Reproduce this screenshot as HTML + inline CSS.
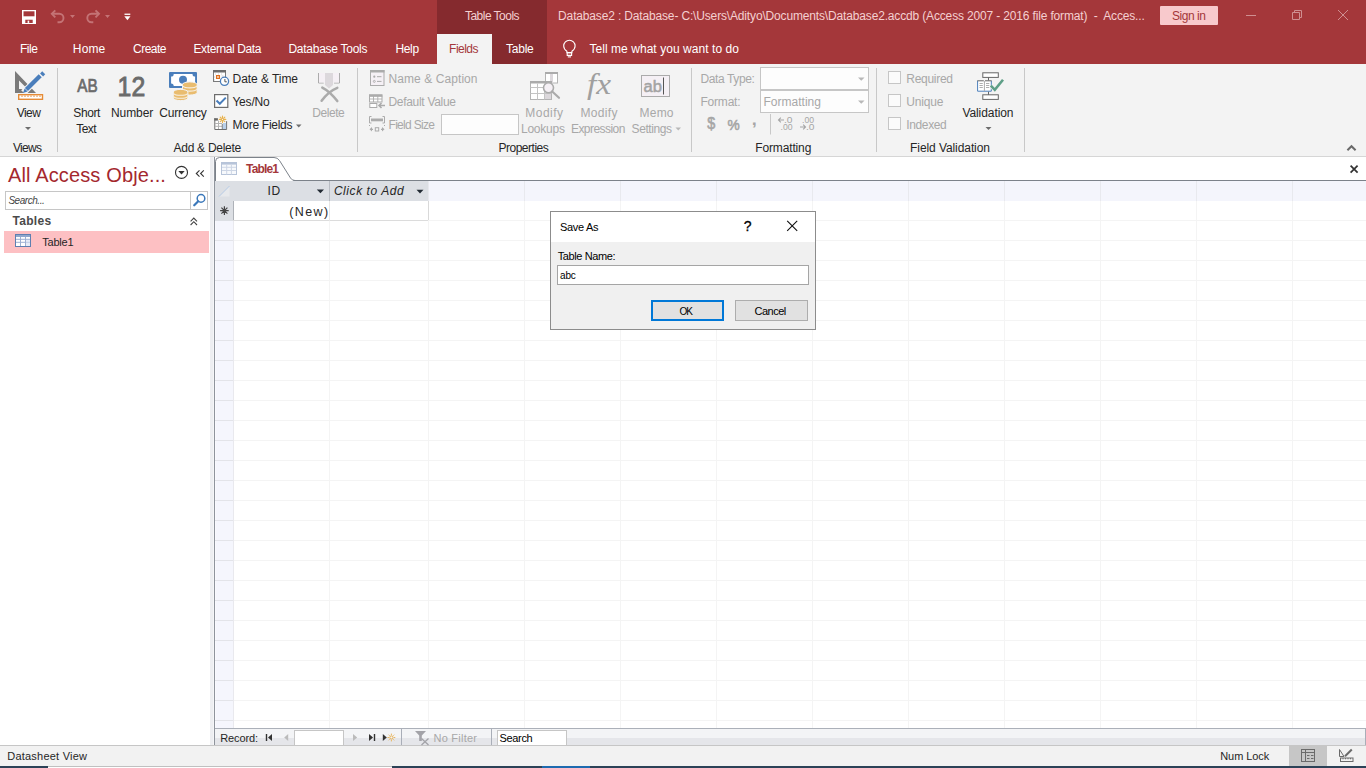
<!DOCTYPE html>
<html><head><meta charset="utf-8">
<style>
*{margin:0;padding:0;box-sizing:border-box}
html,body{width:1366px;height:768px;overflow:hidden;background:#fff;font-family:"Liberation Sans",sans-serif;font-size:12px;color:#262626}
.a{position:absolute}
.ic{position:absolute}
.t{position:absolute;white-space:nowrap;line-height:20px;height:20px}
.wt{color:#fff}
.pk{color:#f4d0d1}
.sg{color:#a4373a}
.rd{color:#a4373a}
.rd2{color:#a4282e}
.gl{color:#262626}
.bk{color:#000}
.sr{color:#444}
.tb{color:#4a4a4a}
.dis{color:#a8a8a8}
svg{position:absolute;overflow:visible}
</style></head><body>
<!-- title bar & tabs -->
<div class="a" style="left:0;top:0;width:1366px;height:64px;background:#a4373a"></div>
<div class="a" style="left:437px;top:0;width:110px;height:64px;background:#852a2e"></div>
<div class="a" style="left:437px;top:34px;width:55px;height:30px;background:#f3f3f3"></div>
<div class="a" style="left:1160px;top:6px;width:58px;height:19px;background:#f8c9cc;border-radius:1px"></div>

<!-- ribbon -->
<div class="a" style="left:0;top:64px;width:1366px;height:92px;background:#f3f3f3"></div>
<div class="a" style="left:0;top:156px;width:1366px;height:1px;background:#d6d6d6"></div>
<div class="a" style="left:57px;top:68px;width:1px;height:84px;background:#c8c8c8"></div>
<div class="a" style="left:357px;top:68px;width:1px;height:84px;background:#c8c8c8"></div>
<div class="a" style="left:691px;top:68px;width:1px;height:84px;background:#c8c8c8"></div>
<div class="a" style="left:876px;top:68px;width:1px;height:84px;background:#c8c8c8"></div>
<div class="a" style="left:1024px;top:68px;width:1px;height:84px;background:#c8c8c8"></div>

<!-- nav pane -->
<div class="a" style="left:0;top:157px;width:210px;height:588px;background:#fff"></div>
<div class="a" style="left:210px;top:157px;width:3px;height:588px;background:#edeef1"></div>
<div class="a" style="left:213px;top:157px;width:1px;height:588px;background:#f5f6f8"></div>
<div class="a" style="left:214px;top:157px;width:1px;height:588px;background:#8f949c"></div>
<div class="a" style="left:5px;top:191px;width:203px;height:19px;border:1px solid #c6c6c6;background:#fff"></div>
<div class="a" style="left:190px;top:191px;width:1px;height:19px;background:#c6c6c6"></div>
<div class="a" style="left:4px;top:231px;width:205px;height:22px;background:#fdc0c3"></div>

<!-- document area -->
<div class="a" style="left:215px;top:157px;width:1151px;height:588px;background:#fff"></div>
<div class="a" style="left:293px;top:180px;width:1073px;height:1px;background:#7c828a"></div>
<div class="a" style="left:215px;top:181px;width:213px;height:20px;background:#dcdfe4"></div>
<div class="a" style="left:428px;top:181px;width:938px;height:20px;background:#f4f5fc"></div>
<div class="a" style="left:329px;top:181px;width:1px;height:20px;background:#b9bdc4"></div>
<div class="a" style="left:524px;top:181px;width:1px;height:20px;background:#e8e9ee"></div>
<div class="a" style="left:620px;top:181px;width:1px;height:20px;background:#e8e9ee"></div>
<div class="a" style="left:716px;top:181px;width:1px;height:20px;background:#e8e9ee"></div>
<div class="a" style="left:812px;top:181px;width:1px;height:20px;background:#e8e9ee"></div>
<div class="a" style="left:908px;top:181px;width:1px;height:20px;background:#e8e9ee"></div>
<div class="a" style="left:1004px;top:181px;width:1px;height:20px;background:#e8e9ee"></div>
<div class="a" style="left:1100px;top:181px;width:1px;height:20px;background:#e8e9ee"></div>
<div class="a" style="left:1196px;top:181px;width:1px;height:20px;background:#e8e9ee"></div>
<div class="a" style="left:1292px;top:181px;width:1px;height:20px;background:#e8e9ee"></div>
<div class="a" style="left:428px;top:181px;width:1px;height:20px;background:#e8e9ee"></div>
<div class="a" style="left:215px;top:201px;width:18px;height:20px;background:#dcdfe4"></div>
<div class="a" style="left:233px;top:201px;width:1px;height:20px;background:#aeb2b8"></div>
<div class="a" style="left:233px;top:220px;width:196px;height:1px;background:#dcdcdc"></div>
<div class="a" style="left:329px;top:201px;width:1px;height:20px;background:#e6e6e6"></div>
<div class="a" style="left:428px;top:201px;width:1px;height:20px;background:#d9d9d9"></div>
<div class="a" style="left:215px;top:221px;width:18px;height:507px;background:#f5f6fd"></div>
<div class="a" style="left:215px;top:221px;width:1px;height:507px;background:#fafafe"></div>
<div class="a" style="left:233px;top:221px;width:1px;height:507px;background:#e9e9ee"></div>
<div class="a" style="left:215px;top:240px;width:18px;height:1px;background:#e3e4e9"></div>
<div class="a" style="left:234px;top:240px;width:1132px;height:1px;background:#f4f4f4"></div>
<div class="a" style="left:215px;top:260px;width:18px;height:1px;background:#e3e4e9"></div>
<div class="a" style="left:234px;top:260px;width:1132px;height:1px;background:#f4f4f4"></div>
<div class="a" style="left:215px;top:280px;width:18px;height:1px;background:#e3e4e9"></div>
<div class="a" style="left:234px;top:280px;width:1132px;height:1px;background:#f4f4f4"></div>
<div class="a" style="left:215px;top:300px;width:18px;height:1px;background:#e3e4e9"></div>
<div class="a" style="left:234px;top:300px;width:1132px;height:1px;background:#f4f4f4"></div>
<div class="a" style="left:215px;top:320px;width:18px;height:1px;background:#e3e4e9"></div>
<div class="a" style="left:234px;top:320px;width:1132px;height:1px;background:#f4f4f4"></div>
<div class="a" style="left:215px;top:340px;width:18px;height:1px;background:#e3e4e9"></div>
<div class="a" style="left:234px;top:340px;width:1132px;height:1px;background:#f4f4f4"></div>
<div class="a" style="left:215px;top:360px;width:18px;height:1px;background:#e3e4e9"></div>
<div class="a" style="left:234px;top:360px;width:1132px;height:1px;background:#f4f4f4"></div>
<div class="a" style="left:215px;top:380px;width:18px;height:1px;background:#e3e4e9"></div>
<div class="a" style="left:234px;top:380px;width:1132px;height:1px;background:#f4f4f4"></div>
<div class="a" style="left:215px;top:400px;width:18px;height:1px;background:#e3e4e9"></div>
<div class="a" style="left:234px;top:400px;width:1132px;height:1px;background:#f4f4f4"></div>
<div class="a" style="left:215px;top:420px;width:18px;height:1px;background:#e3e4e9"></div>
<div class="a" style="left:234px;top:420px;width:1132px;height:1px;background:#f4f4f4"></div>
<div class="a" style="left:215px;top:440px;width:18px;height:1px;background:#e3e4e9"></div>
<div class="a" style="left:234px;top:440px;width:1132px;height:1px;background:#f4f4f4"></div>
<div class="a" style="left:215px;top:460px;width:18px;height:1px;background:#e3e4e9"></div>
<div class="a" style="left:234px;top:460px;width:1132px;height:1px;background:#f4f4f4"></div>
<div class="a" style="left:215px;top:480px;width:18px;height:1px;background:#e3e4e9"></div>
<div class="a" style="left:234px;top:480px;width:1132px;height:1px;background:#f4f4f4"></div>
<div class="a" style="left:215px;top:500px;width:18px;height:1px;background:#e3e4e9"></div>
<div class="a" style="left:234px;top:500px;width:1132px;height:1px;background:#f4f4f4"></div>
<div class="a" style="left:215px;top:520px;width:18px;height:1px;background:#e3e4e9"></div>
<div class="a" style="left:234px;top:520px;width:1132px;height:1px;background:#f4f4f4"></div>
<div class="a" style="left:215px;top:540px;width:18px;height:1px;background:#e3e4e9"></div>
<div class="a" style="left:234px;top:540px;width:1132px;height:1px;background:#f4f4f4"></div>
<div class="a" style="left:215px;top:560px;width:18px;height:1px;background:#e3e4e9"></div>
<div class="a" style="left:234px;top:560px;width:1132px;height:1px;background:#f4f4f4"></div>
<div class="a" style="left:215px;top:580px;width:18px;height:1px;background:#e3e4e9"></div>
<div class="a" style="left:234px;top:580px;width:1132px;height:1px;background:#f4f4f4"></div>
<div class="a" style="left:215px;top:600px;width:18px;height:1px;background:#e3e4e9"></div>
<div class="a" style="left:234px;top:600px;width:1132px;height:1px;background:#f4f4f4"></div>
<div class="a" style="left:215px;top:620px;width:18px;height:1px;background:#e3e4e9"></div>
<div class="a" style="left:234px;top:620px;width:1132px;height:1px;background:#f4f4f4"></div>
<div class="a" style="left:215px;top:640px;width:18px;height:1px;background:#e3e4e9"></div>
<div class="a" style="left:234px;top:640px;width:1132px;height:1px;background:#f4f4f4"></div>
<div class="a" style="left:215px;top:660px;width:18px;height:1px;background:#e3e4e9"></div>
<div class="a" style="left:234px;top:660px;width:1132px;height:1px;background:#f4f4f4"></div>
<div class="a" style="left:215px;top:680px;width:18px;height:1px;background:#e3e4e9"></div>
<div class="a" style="left:234px;top:680px;width:1132px;height:1px;background:#f4f4f4"></div>
<div class="a" style="left:215px;top:700px;width:18px;height:1px;background:#e3e4e9"></div>
<div class="a" style="left:234px;top:700px;width:1132px;height:1px;background:#f4f4f4"></div>
<div class="a" style="left:215px;top:720px;width:18px;height:1px;background:#e3e4e9"></div>
<div class="a" style="left:234px;top:720px;width:1132px;height:1px;background:#f4f4f4"></div>
<div class="a" style="left:428px;top:220px;width:938px;height:1px;background:#f4f4f4"></div>
<div class="a" style="left:329px;top:221px;width:1px;height:507px;background:#f4f4f4"></div>
<div class="a" style="left:428px;top:221px;width:1px;height:507px;background:#f4f4f4"></div>
<div class="a" style="left:524px;top:201px;width:1px;height:527px;background:#f4f4f4"></div>
<div class="a" style="left:620px;top:201px;width:1px;height:527px;background:#f4f4f4"></div>
<div class="a" style="left:716px;top:201px;width:1px;height:527px;background:#f4f4f4"></div>
<div class="a" style="left:812px;top:201px;width:1px;height:527px;background:#f4f4f4"></div>
<div class="a" style="left:908px;top:201px;width:1px;height:527px;background:#f4f4f4"></div>
<div class="a" style="left:1004px;top:201px;width:1px;height:527px;background:#f4f4f4"></div>
<div class="a" style="left:1100px;top:201px;width:1px;height:527px;background:#f4f4f4"></div>
<div class="a" style="left:1196px;top:201px;width:1px;height:527px;background:#f4f4f4"></div>
<div class="a" style="left:1292px;top:201px;width:1px;height:527px;background:#f4f4f4"></div>
<!-- record bar -->
<div class="a" style="left:215px;top:728px;width:1151px;height:1px;background:#abb0b9"></div>
<div class="a" style="left:215px;top:729px;width:1151px;height:9px;background:#f3f4f6"></div>
<div class="a" style="left:215px;top:738px;width:1151px;height:7px;background:#e5e6ea"></div>
<div class="a" style="left:1365px;top:728px;width:1px;height:18px;background:#a9aeb8"></div>
<div class="a" style="left:294px;top:730px;width:50px;height:15px;border:1px solid #c6c6c6;border-bottom:none;background:#fff"></div>
<div class="a" style="left:401px;top:729px;width:1px;height:16px;background:#a9aeb8"></div>
<div class="a" style="left:491px;top:729px;width:1px;height:16px;background:#a9aeb8"></div>
<div class="a" style="left:497px;top:730px;width:70px;height:15px;border:1px solid #c6c6c6;border-bottom:none;background:#fff"></div>

<!-- status bar -->
<div class="a" style="left:0;top:745px;width:1366px;height:1px;background:#c6c6c6"></div>
<div class="a" style="left:0;top:746px;width:1366px;height:20px;background:#f2f2f2"></div>
<div class="a" style="left:1289px;top:746px;width:38px;height:20px;background:#c6c6c6"></div>
<div class="a" style="left:0;top:766px;width:1366px;height:2px;background:#2c4257"></div>
<div class="a" style="left:48px;top:766px;width:344px;height:1px;background:#c0c0c0"></div>
<div class="a" style="left:48px;top:767px;width:344px;height:1px;background:#fff"></div>
<div class="a" style="left:542px;top:766px;width:48px;height:2px;background:#1e6bb0"></div>

<svg class="ic" width="1366" height="768" style="left:0;top:0" viewBox="0 0 1366 768">
<!-- QAT save -->
<path d="M22 10h14v14h-14z" fill="#fff"/>
<path d="M23.5 11.3h11v5h-11z" fill="#a4373a"/>
<path d="M25.3 19.7h7.4v3.2h-7.4z" fill="#a4373a"/>
<path d="M27.6 20.6h1.6v2.3h-1.6z" fill="#fff"/>
<!-- undo -->
<g fill="none" stroke="#c47375" stroke-width="1.9">
<path d="M52 13.8h7.3a4.2 4.2 0 0 1 0 8.4h-1.8"/>
<path d="M55.3 10.3l-3.5 3.5 3.5 3.5"/>
<path d="M98.8 13.8h-7.3a4.2 4.2 0 0 0 0 8.4h1.8"/>
<path d="M95.5 10.3l3.5 3.5-3.5 3.5"/>
</g>
<path d="M70 15h5l-2.5 3z M105 15h5l-2.5 3z" fill="#c47375"/>
<!-- customize -->
<path d="M124.5 13.6h5.8v1.3h-5.8z" fill="#fff"/>
<path d="M124.3 16.3h6.2l-3.1 3.9z" fill="#fff"/>
<!-- bulb -->
<g fill="none" stroke="#fff" stroke-width="1.1">
<path d="M566.9 52.6v-1.3c-1.8-1.3-3.2-3.1-3.2-5.3a5.7 5.7 0 0 1 11.4 0c0 2.2-1.4 4-3.2 5.3v1.3z"/>
<path d="M567.2 52.8h4.4v2.6h-4.4z"/>
<path d="M567.8 56.9h3.2"/>
</g>
<!-- window controls -->
<g stroke="#cf8f91" stroke-width="1" fill="none">
<path d="M1246 15.5h10"/>
<path d="M1292.5 12.5h7v7h-7z M1294.5 12.5v-2h7v7h-2"/>
<path d="M1338 10l10 10 M1348 10l-10 10"/>
</g>

<!-- View icon -->
<path d="M15 71V93H36Z M19 80.5V89H27.5Z" fill="#7a7a7a" fill-rule="evenodd"/>
<path d="M23.5 92.5L43.5 72.5" stroke="#f3f3f3" stroke-width="6.5"/>
<path d="M23 93l1.6-4.6 3 3z" fill="#4a7ebb"/>
<path d="M26.4 89.6L40.2 75.8" stroke="#4a7ebb" stroke-width="4.3"/>
<path d="M41.6 74.9L43.7 72.8" stroke="#4a7ebb" stroke-width="4.3"/>
<rect x="18.7" y="94.7" width="23.8" height="4.6" fill="#fff" stroke="#e58b36" stroke-width="1.4"/>
<path d="M22 95.5v1.5 M25 95.5v1.5 M28 95.5v1.5 M31 95.5v1.5 M34 95.5v1.5 M37 95.5v1.5 M40 95.5v1.5" stroke="#e58b36" stroke-width="1"/>
<!-- AB, 12 -->
<text x="77.3" y="92" font-family="Liberation Sans" font-size="18.4" fill="#6b6b6b" stroke="#6b6b6b" stroke-width="0.7" textLength="20.4" lengthAdjust="spacingAndGlyphs">AB</text>
<text x="117.6" y="95.5" font-family="Liberation Sans" font-size="28" fill="#6b6b6b" stroke="#6b6b6b" stroke-width="0.9" textLength="27.6" lengthAdjust="spacingAndGlyphs">12</text>
<!-- Currency -->
<rect x="169" y="72" width="28" height="16" rx="1" fill="#4a7ebb"/>
<path d="M171.1 76.6a2.6 2.6 0 0 0 2.6-2.6h18.8a2.6 2.6 0 0 0 2.6 2.6v6.8a2.6 2.6 0 0 0-2.6 2.6h-18.8a2.6 2.6 0 0 0-2.6-2.6z" fill="#fff"/>
<circle cx="183" cy="79.8" r="4" fill="#4a7ebb"/>
<g fill="#e9bc6f" stroke="#f3f3f3" stroke-width="1">
<path d="M182.5 92.5v-8a7.3 2.6 0 0 1 14.6 0v8a7.3 2.6 0 0 1-14.6 0z"/>
</g>
<g fill="none" stroke="#f8f0e2" stroke-width="1.1">
<path d="M182.8 86.2a7.3 2.4 0 0 0 14 0 M182.8 89.4a7.3 2.4 0 0 0 14 0"/>
</g>
<g fill="#e9bc6f" stroke="#f3f3f3" stroke-width="1">
<path d="M173.3 98v-6a7.3 2.6 0 0 1 14.6 0v6a7.3 2.6 0 0 1-14.6 0z"/>
</g>
<g fill="none" stroke="#f8f0e2" stroke-width="1.1">
<path d="M173.6 93.6a7.3 2.4 0 0 0 14 0 M173.6 96.6a7.3 2.4 0 0 0 14 0"/>
</g>
<!-- Date & Time -->
<rect x="213.5" y="70.5" width="12" height="11" fill="#fff" stroke="#7a7a7a" stroke-width="1"/>
<rect x="213" y="70" width="13" height="2.5" fill="#6d6d6d"/>
<path d="M216.6 75.6h2.8v2.8h-2.8z" fill="none" stroke="#e0701e" stroke-width="1.3"/>
<path d="M215 74h1 M218 74h1 M221 74h1 M214.5 76.5v1 M214.5 79.5v1 M221.5 76h2" stroke="#c8c8c8" stroke-width="0.8"/>
<circle cx="224.5" cy="81.3" r="4.1" fill="#fff" stroke="#4a7ebb" stroke-width="1.3"/>
<path d="M224.9 79v2.8h1.9" fill="none" stroke="#555" stroke-width="1"/>
<!-- Yes/No -->
<rect x="214.6" y="94.6" width="13.2" height="12.8" fill="#fff" stroke="#6d6d6d" stroke-width="1.2"/>
<path d="M216.5 100.5l3.3 3.3 6-6.2" fill="none" stroke="#4a7ebb" stroke-width="2"/>
<!-- More Fields -->
<rect x="214.8" y="118.7" width="11.3" height="10.8" fill="#fff"/>
<path d="M214.8 118.2v11.3h11.8v-8.3" fill="none" stroke="#6d6d6d" stroke-width="1"/>
<rect x="214.3" y="118.2" width="3.6" height="2.4" fill="#666"/>
<path d="M215 123.5h7 M215 126.3h7 M218.5 120.5v8.5" stroke="#b4b4b4" stroke-width="1"/>
<path d="M222.3 124v5.5" stroke="#6d6d6d" stroke-width="1"/>
<rect x="222.8" y="123" width="3.3" height="6" fill="#b9d0ea"/>
<rect x="220" y="116" width="6" height="6.5" fill="#f3f3f3"/>
<circle cx="222.5" cy="119.4" r="1.1" fill="none" stroke="#e9b24c" stroke-width="1.1"/>
<path d="M224.50 119.40L225.80 119.40 M223.91 120.81L224.83 121.73 M222.50 121.40L222.50 122.70 M221.09 120.81L220.17 121.73 M220.50 119.40L219.20 119.40 M221.09 117.99L220.17 117.07 M222.50 117.40L222.50 116.10 M223.91 117.99L224.83 117.07" stroke="#e9b24c" stroke-width="1.1" stroke-linecap="round"/>
<!-- Delete (disabled) -->
<path d="M318.5 73v10h5.2 M339.5 73v10h-5.5" fill="none" stroke="#ababab" stroke-width="1"/>
<rect x="319" y="73" width="20" height="9.5" fill="#f5f0f5"/>
<path d="M325 73h8v12l-4 3.6-4-3.6z" fill="#dcd8dc"/>
<path d="M322.3 87.6c5 2.5 10 7 15 13.5 M337.3 87.8c-5 2-11 6.5-15.7 13" fill="none" stroke="#ababab" stroke-width="2.5" stroke-linecap="round"/>
<!-- Properties icons (disabled) -->
<rect x="370.5" y="70.5" width="13.5" height="15" fill="#f5f0f5" stroke="#ababab" stroke-width="1"/>
<rect x="370" y="70" width="14.5" height="2.5" fill="#ababab"/>
<circle cx="374.3" cy="76.7" r="1.1" fill="#ababab"/>
<circle cx="374.3" cy="81.4" r="1" fill="none" stroke="#ababab" stroke-width="0.9"/>
<path d="M377 76.7h4.5 M377 81.4h4.5" stroke="#ababab" stroke-width="1"/>
<rect x="369.5" y="96" width="12.5" height="6" fill="#fff" stroke="#ababab" stroke-width="1"/>
<rect x="369" y="94.2" width="13.5" height="2.5" fill="#ababab"/>
<path d="M373.5 96v6 M377.8 96v6 M369.5 99h12.5" stroke="#ababab" stroke-width="0.9"/>
<rect x="369.8" y="103.5" width="7" height="4" fill="#fff" stroke="#ababab" stroke-width="1"/>
<path d="M385 105.5h-5.5 M381.5 103l-2.5 2.5 2.5 2.5" fill="none" stroke="#ababab" stroke-width="1.6"/>
<path d="M371.5 116.5h-2v6.5h2 M382.5 116.5h2v6.5h-2" fill="none" stroke="#ababab" stroke-width="1"/>
<rect x="371" y="118.5" width="12" height="2.8" fill="#ababab"/>
<path d="M369.5 125v1 M384.5 125v1" stroke="#ababab" stroke-width="1"/>
<path d="M369.5 129.3l2.5-2.3v4.6z M384.5 129.3l-2.5-2.3v4.6z" fill="#ababab"/>
<path d="M371.5 129.3h1.5 M381 129.3h1.5" stroke="#ababab" stroke-width="1.2"/>
<rect x="375.3" y="127.7" width="3.4" height="3.3" fill="none" stroke="#ababab" stroke-width="1"/>
<!-- Modify Lookups -->
<rect x="545.5" y="72.5" width="12" height="10.5" fill="#fff" stroke="#b4b4b4" stroke-width="1"/>
<rect x="545" y="72" width="13" height="2" fill="#ababab"/>
<rect x="550" y="74" width="3" height="9" fill="#dcd8dc"/>
<rect x="530.5" y="81.5" width="21" height="18" fill="#fff" stroke="#b4b4b4" stroke-width="1"/>
<rect x="530" y="81" width="22" height="2.5" fill="#ababab"/>
<path d="M530.5 87.5h21 M530.5 93.5h21 M537.5 83.5v16 M544.5 83.5v16" stroke="#c4c4c4" stroke-width="1"/>
<rect x="545" y="94" width="6" height="5" fill="#dcd8dc"/>
<circle cx="548.5" cy="87.8" r="5" fill="#f5f0f5" stroke="#ababab" stroke-width="1.6"/>
<path d="M552.2 91.5l6.8 6.3" stroke="#ababab" stroke-width="2.2" stroke-linecap="round"/>
<!-- fx -->
<text x="587" y="94" font-family="Liberation Serif" font-style="italic" font-size="30" fill="#9f9f9f" textLength="24" lengthAdjust="spacingAndGlyphs">fx</text>
<!-- Memo -->
<rect x="641.5" y="75.5" width="28" height="21" fill="#f5f0f5" stroke="#ababab" stroke-width="1"/>
<text x="643.6" y="92" font-family="Liberation Sans" font-size="16" fill="#a3a3a3" stroke="#a3a3a3" stroke-width="0.5" textLength="18.4" lengthAdjust="spacingAndGlyphs">ab</text>
<path d="M663.5 77.5v17" stroke="#555" stroke-width="1"/>
<!-- combos -->
<rect x="760.5" y="67.5" width="108" height="22" fill="#fdfdfd" stroke="#c6c6c6" stroke-width="1"/>
<rect x="760.5" y="90.5" width="108" height="22" fill="#fdfdfd" stroke="#c6c6c6" stroke-width="1"/>
<path d="M858 77.5h6.5l-3.25 3.2z M858 100.5h6.5l-3.25 3.2z" fill="#b8b8b8"/>
<!-- field size input -->
<rect x="441.5" y="114.5" width="77" height="20" fill="#fdfdfd" stroke="#c6c6c6" stroke-width="1"/>
<!-- dropdown arrows -->
<path d="M296 124.5h5.5l-2.75 3z" fill="#6d6d6d"/>
<path d="M675.5 127.5h5.5l-2.75 3z" fill="#b8b8b8"/>
<path d="M25 127h6l-3 3z" fill="#6d6d6d"/>
<path d="M985.5 127h6l-3 3z" fill="#6d6d6d"/>
<!-- $ % , -->
<text x="707.3" y="129.2" font-family="Liberation Sans" font-size="16.5" fill="#a6a6a6" stroke="#a6a6a6" stroke-width="0.6" textLength="8" lengthAdjust="spacingAndGlyphs">$</text>
<text x="727.4" y="129.8" font-family="Liberation Sans" font-size="15" fill="#a6a6a6" stroke="#a6a6a6" stroke-width="0.6" textLength="12.2" lengthAdjust="spacingAndGlyphs">%</text>
<text x="751.8" y="124.5" font-family="Liberation Sans" font-weight="bold" font-size="17" fill="#a6a6a6" textLength="5" lengthAdjust="spacingAndGlyphs">,</text>
<path d="M770.5 114v20.5" stroke="#c8c8c8" stroke-width="1"/>
<text x="784" y="123" font-family="Liberation Sans" font-size="9" fill="#a6a6a6" textLength="8.5" lengthAdjust="spacingAndGlyphs">.0</text>
<text x="780.5" y="130" font-family="Liberation Sans" font-size="9" fill="#a6a6a6" textLength="12" lengthAdjust="spacingAndGlyphs">.00</text>
<path d="M784 120h-5.5 M780.8 117.7l-2.3 2.3 2.3 2.3" fill="none" stroke="#a6a6a6" stroke-width="1.1"/>
<text x="802" y="123" font-family="Liberation Sans" font-size="9" fill="#a6a6a6" textLength="12" lengthAdjust="spacingAndGlyphs">.00</text>
<text x="806" y="130" font-family="Liberation Sans" font-size="9" fill="#a6a6a6" textLength="8.5" lengthAdjust="spacingAndGlyphs">.0</text>
<path d="M800 127h5.5 M803.2 124.7l2.3 2.3-2.3 2.3" fill="none" stroke="#a6a6a6" stroke-width="1.1"/>
<!-- checkboxes -->
<rect x="888.5" y="71.5" width="12" height="12" fill="#fbfbfb" stroke="#c6c6c6" stroke-width="1"/>
<rect x="888.5" y="94.5" width="12" height="12" fill="#fbfbfb" stroke="#c6c6c6" stroke-width="1"/>
<rect x="888.5" y="117.5" width="12" height="12" fill="#fbfbfb" stroke="#c6c6c6" stroke-width="1"/>
<!-- Validation icon -->
<rect x="982.8" y="72.8" width="15.5" height="4.6" fill="#fff" stroke="#666" stroke-width="1"/>
<rect x="982.8" y="94.8" width="15.5" height="4.6" fill="#fff" stroke="#666" stroke-width="1"/>
<path d="M988.5 77.5v3 M988.5 91.5v3.3" stroke="#666" stroke-width="1"/>
<rect x="977.6" y="80.8" width="13.7" height="10.4" fill="#fff"/>
<path d="M977.6 80.8v10.4h13.7v-10.4" fill="none" stroke="#4a7ebb" stroke-width="1"/>
<path d="M977.3 80.8h6.5 M985 80.8h6.6" stroke="#666" stroke-width="1"/>
<path d="M984.4 81v10" stroke="#aaa" stroke-width="1"/>
<path d="M979.5 83.5h3.3 M979.5 85.5h3.3 M979.5 87.5h3.3 M986 83.5h3.3 M986 85.5h3.3 M986 87.5h3.3" stroke="#999" stroke-width="0.8"/>
<path d="M990.8 85.6l4 4.2 8.2-10" fill="none" stroke="#f3f3f3" stroke-width="4"/>
<path d="M990.8 85.6l4 4.2 8.2-10" fill="none" stroke="#5e9f87" stroke-width="2.6"/>
<!-- ribbon collapse -->
<path d="M1347.4 150.3l4.1-4.1 4.1 4.1" fill="none" stroke="#6a6a6a" stroke-width="2"/>

<!-- nav pane icons -->
<circle cx="181.5" cy="172.4" r="6" fill="none" stroke="#333" stroke-width="1.1"/>
<path d="M178.3 171h6.4l-3.2 3.4z" fill="#333"/>
<path d="M199.5 170.4l-3.2 3.1 3.2 3.1 M203.8 170.4l-3.2 3.1 3.2 3.1" fill="none" stroke="#333" stroke-width="1.1"/>
<circle cx="201" cy="198.4" r="3.8" fill="none" stroke="#3b78ba" stroke-width="1.5"/>
<path d="M198.2 201.3l-4 4" stroke="#3b78ba" stroke-width="2.2" stroke-linecap="round"/>
<path d="M190.6 221.3l3.2-3.3 3.2 3.3 M190.6 225l3.2-3.3 3.2 3.3" fill="none" stroke="#444" stroke-width="1.1"/>
<!-- nav table icon -->
<rect x="15.5" y="234.5" width="15" height="12" fill="#fff" stroke="#5e7fb0" stroke-width="1"/>
<rect x="16" y="235" width="14" height="2" fill="#8fa6cc"/>
<path d="M16 239.3h14 M16 242.3h14 M20.5 237v9 M25.5 237v9" stroke="#9db0d2" stroke-width="1"/>
<rect x="26" y="240" width="4" height="6" fill="#d3def2" opacity="0.6"/>

<!-- document tab -->
<path d="M215.5 181V161.5Q215.5 157.5 219.5 157.5H274Q277.5 157.5 279.5 160.5L290.5 178Q292 180.5 295 180.5" fill="#fff" stroke="#7c828a" stroke-width="1"/>
<rect x="221.5" y="162.5" width="15" height="12" fill="#f7f9fc" stroke="#b7c4d9" stroke-width="1"/>
<rect x="222" y="163" width="14" height="1.6" fill="#b7c4d9"/>
<path d="M222 167.3h14 M222 170.5h14 M226.7 164.5v10 M231.4 164.5v10" stroke="#cdd6e5" stroke-width="1"/>
<path d="M1350.6 165.6l7 7 M1357.6 165.6l-7 7" stroke="#333" stroke-width="1.7"/>
<!-- select all triangle -->
<path d="M219 196.5L229.5 186v10.5z" fill="#e7e9ec"/>
<path d="M219 196.5L229.5 186" stroke="#a9c4e3" stroke-width="0.8"/>
<!-- header dropdown arrows -->
<path d="M316.8 189.5h7.2l-3.6 3.8z" fill="#222a33"/>
<path d="M416.5 189.8h7l-3.5 3.8z" fill="#222a33"/>
<!-- new row asterisk -->
<path d="M224.4 206.3v8.6 M220.1 210.6h8.6 M221.4 207.6l6 6 M227.4 207.6l-6 6" stroke="#444" stroke-width="1.2"/>

<!-- record nav -->
<path d="M266.5 734v7" stroke="#333" stroke-width="1.4"/>
<path d="M272 734v7l-4-3.5z" fill="#333"/>
<path d="M288.2 734v7l-4-3.5z" fill="#bbb"/>
<path d="M353 734v7l4.2-3.5z" fill="#bbb"/>
<path d="M369 734v7l4-3.5z" fill="#333"/>
<path d="M374.5 734v7" stroke="#333" stroke-width="1.4"/>
<path d="M382.8 734v7l4-3.5z" fill="#333"/>
<circle cx="391.4" cy="737.5" r="1.6" fill="none" stroke="#e8b050" stroke-width="1"/>
<path d="M391.4 733.6v1.5 M391.4 739.9v1.5 M387.5 737.5h1.5 M393.8 737.5h1.5 M388.6 734.7l1 1 M393.2 739.3l1 1 M394.2 734.7l-1 1 M389.6 739.3l-1 1" stroke="#e8b050" stroke-width="0.9"/>
<path d="M415 731h11l-4.2 4.5v5.5h-2.6v-5.5z" fill="#a3a3a8"/>
<path d="M421.5 738.5l7 6.5 M428.5 738.5l-7 6.5" stroke="#a3a3a8" stroke-width="1.3"/>

<!-- status bar icons -->
<rect x="1301.5" y="749.5" width="13" height="12" fill="none" stroke="#6a6a6a" stroke-width="1"/>
<path d="M1305.5 749.5v12 M1301.5 752.5h13" stroke="#6a6a6a" stroke-width="1"/>
<path d="M1307 755.5h2.5 M1311 755.5h2.5 M1307 758.5h2.5 M1311 758.5h2.5" stroke="#6a6a6a" stroke-width="1"/>
<path d="M1339.5 749.5v7h4.5z" fill="none" stroke="#6a6a6a" stroke-width="1"/>
<path d="M1345 756.3l6.8-6.8" stroke="#6a6a6a" stroke-width="2"/>
<rect x="1340.5" y="758" width="12.5" height="3.5" fill="none" stroke="#6a6a6a" stroke-width="1"/>
<path d="M1343 758v1.3 M1345.5 758v1.3 M1348 758v1.3 M1350.5 758v1.3" stroke="#6a6a6a" stroke-width="0.9"/>
</svg>

<!-- dialog -->
<div class="a" style="left:550px;top:211px;width:266px;height:119px;border:1px solid #8c8c8c;background:#f0f0f0"></div>
<div class="a" style="left:551px;top:212px;width:264px;height:30px;background:#fff"></div>
<div class="a" style="left:557px;top:265px;width:252px;height:20px;border:1px solid #a5a5a5;background:#fff"></div>
<div class="a" style="left:651px;top:300px;width:73px;height:21px;border:2px solid #0078d7;background:#e1e1e1"></div>
<div class="a" style="left:735px;top:300px;width:73px;height:21px;border:1px solid #adadad;background:#e1e1e1"></div>
<svg class="ic" width="1366" height="768" style="left:0;top:0">
<text x="743.8" y="231" font-family="Liberation Sans" font-size="14" fill="#000" stroke="#000" stroke-width="0.3">?</text>
<path d="M787.2 220.9l10 10 M797.2 220.9l-10 10" stroke="#111" stroke-width="1.1"/>
</svg>

<div class="t pk" id="t0" style="left:465.00px;top:6px;font-size:12px;letter-spacing:-0.530px;">Table Tools</div>
<div class="t pk" id="t1" style="left:558.12px;top:6px;font-size:12px;letter-spacing:-0.157px;">Database2 : Database- C:\Users\Adityo\Documents\Database2.accdb (Access 2007 - 2016 file format)&nbsp; -&nbsp; Acces...</div>
<div class="t sg" id="t2" style="left:1172.00px;top:6px;font-size:12px;letter-spacing:-0.450px;">Sign in</div>
<div class="t wt" id="t3" style="left:20.00px;top:39px;font-size:12px;letter-spacing:-0.473px;">File</div>
<div class="t wt" id="t4" style="left:72.86px;top:39px;font-size:12px;letter-spacing:0.127px;">Home</div>
<div class="t wt" id="t5" style="left:133.12px;top:39px;font-size:12px;letter-spacing:-0.524px;">Create</div>
<div class="t wt" id="t6" style="left:193.48px;top:39px;font-size:12px;letter-spacing:-0.390px;">External Data</div>
<div class="t wt" id="t7" style="left:288.48px;top:39px;font-size:12px;letter-spacing:-0.268px;">Database Tools</div>
<div class="t wt" id="t8" style="left:395.50px;top:39px;font-size:12px;letter-spacing:-0.360px;">Help</div>
<div class="t rd" id="t9" style="left:449.12px;top:39px;font-size:12px;letter-spacing:-0.524px;">Fields</div>
<div class="t wt" id="t10" style="left:506.00px;top:39px;font-size:12px;letter-spacing:-0.235px;">Table</div>
<div class="t wt" id="t11" style="left:589.38px;top:39px;font-size:12px;letter-spacing:0.058px;">Tell me what you want to do</div>
<div class="t gl" id="t12" style="left:16.64px;top:103px;font-size:12px;letter-spacing:-0.480px;">View</div>
<div class="t gl" id="t13" style="left:13.00px;top:138px;font-size:12px;letter-spacing:-0.670px;">Views</div>
<div class="t gl" id="t14" style="left:73.30px;top:103px;font-size:12px;letter-spacing:-0.380px;">Short</div>
<div class="t gl" id="t15" style="left:76.26px;top:119px;font-size:12px;letter-spacing:-0.593px;">Text</div>
<div class="t gl" id="t16" style="left:111.00px;top:103px;font-size:12px;letter-spacing:-0.080px;">Number</div>
<div class="t gl" id="t17" style="left:159.30px;top:103px;font-size:12px;letter-spacing:-0.171px;">Currency</div>
<div class="t gl" id="t18" style="left:232.62px;top:69px;font-size:12px;letter-spacing:-0.062px;">Date &amp; Time</div>
<div class="t gl" id="t19" style="left:232.38px;top:92px;font-size:12px;letter-spacing:-0.184px;">Yes/No</div>
<div class="t gl" id="t20" style="left:232.62px;top:115px;font-size:12px;letter-spacing:-0.282px;">More Fields</div>
<div class="t dis" id="t21" style="left:312.30px;top:103px;font-size:12px;letter-spacing:-0.448px;">Delete</div>
<div class="t gl" id="t22" style="left:173.52px;top:138px;font-size:12px;letter-spacing:-0.271px;">Add &amp; Delete</div>
<div class="t dis" id="t23" style="left:388.50px;top:69px;font-size:12px;letter-spacing:0.077px;">Name &amp; Caption</div>
<div class="t dis" id="t24" style="left:388.50px;top:92px;font-size:12px;letter-spacing:-0.308px;">Default Value</div>
<div class="t dis" id="t25" style="left:388.50px;top:115px;font-size:12px;letter-spacing:-0.689px;">Field Size</div>
<div class="t dis" id="t26" style="left:525.24px;top:103px;font-size:12px;letter-spacing:0.492px;">Modify</div>
<div class="t dis" id="t27" style="left:520.98px;top:119px;font-size:12px;letter-spacing:-0.230px;">Lookups</div>
<div class="t dis" id="t28" style="left:580.50px;top:103px;font-size:12px;letter-spacing:0.312px;">Modify</div>
<div class="t dis" id="t29" style="left:570.98px;top:119px;font-size:12px;letter-spacing:-0.556px;">Expression</div>
<div class="t dis" id="t30" style="left:639.62px;top:103px;font-size:12px;letter-spacing:0.193px;">Memo</div>
<div class="t dis" id="t31" style="left:631.62px;top:119px;font-size:12px;letter-spacing:-0.431px;">Settings</div>
<div class="t gl" id="t32" style="left:498.50px;top:138px;font-size:12px;letter-spacing:-0.496px;">Properties</div>
<div class="t dis" id="t33" style="left:700.50px;top:69px;font-size:12px;letter-spacing:-0.393px;">Data Type:</div>
<div class="t dis" id="t34" style="left:700.50px;top:92px;font-size:12px;letter-spacing:-0.217px;">Format:</div>
<div class="t dis" id="t35" style="left:763.50px;top:92px;font-size:12px;letter-spacing:0.011px;">Formatting</div>
<div class="t gl" id="t36" style="left:755.24px;top:138px;font-size:12px;letter-spacing:-0.140px;">Formatting</div>
<div class="t dis" id="t37" style="left:906.24px;top:69px;font-size:12px;letter-spacing:-0.274px;">Required</div>
<div class="t dis" id="t38" style="left:906.24px;top:92px;font-size:12px;letter-spacing:-0.172px;">Unique</div>
<div class="t dis" id="t39" style="left:906.24px;top:115px;font-size:12px;letter-spacing:-0.363px;">Indexed</div>
<div class="t gl" id="t40" style="left:962.38px;top:103px;font-size:12px;letter-spacing:-0.076px;">Validation</div>
<div class="t gl" id="t41" style="left:910.12px;top:138px;font-size:12px;letter-spacing:-0.087px;">Field Validation</div>
<div class="t rd2" id="t42" style="left:8.00px;top:165px;font-size:20px;letter-spacing:0.136px;">All Access Obje...</div>
<div class="t sr" id="t43" style="left:8.38px;top:191px;font-size:10px;letter-spacing:-0.452px;font-style:italic">Search...</div>
<div class="t tb" id="t44" style="left:12.38px;top:211px;font-size:12px;letter-spacing:0.328px;font-weight:bold">Tables</div>
<div class="t gl" id="t45" style="left:42.26px;top:232px;font-size:11px;letter-spacing:-0.208px;">Table1</div>
<div class="t rd" id="t46" style="left:246.02px;top:159px;font-size:12px;letter-spacing:-0.824px;font-weight:bold">Table1</div>
<div class="t gl" id="t47" style="left:267.60px;top:181px;font-size:12px;letter-spacing:0.520px;">ID</div>
<div class="t gl" id="t48" style="left:333.88px;top:181px;font-size:12px;letter-spacing:0.565px;font-style:italic">Click to Add</div>
<div class="t gl" id="t49" style="left:289.24px;top:202px;font-size:12.5px;letter-spacing:1.370px;">(New)</div>
<div class="t bk" id="t50" style="left:559.88px;top:217px;font-size:11px;letter-spacing:-0.297px;">Save As</div>
<div class="t bk" id="t51" style="left:557.76px;top:246px;font-size:11px;letter-spacing:-0.396px;">Table Name:</div>
<div class="t bk" id="t52" style="left:560.00px;top:266px;font-size:10px;letter-spacing:-0.180px;">abc</div>
<div class="t bk" id="t53" style="left:679.62px;top:302px;font-size:10px;letter-spacing:-1.160px;">OK</div>
<div class="t bk" id="t54" style="left:754.50px;top:301px;font-size:11px;letter-spacing:-0.492px;">Cancel</div>
<div class="t gl" id="t55" style="left:220.24px;top:728px;font-size:11px;letter-spacing:-0.123px;">Record:</div>
<div class="t dis" id="t56" style="left:433.50px;top:728px;font-size:11px;letter-spacing:0.237px;">No Filter</div>
<div class="t bk" id="t57" style="left:499.50px;top:728px;font-size:11px;letter-spacing:-0.328px;">Search</div>
<div class="t gl" id="t58" style="left:7.24px;top:746px;font-size:11px;letter-spacing:0.220px;">Datasheet View</div>
<div class="t gl" id="t59" style="left:1220.24px;top:746px;font-size:11px;letter-spacing:-0.066px;">Num Lock</div>
</body></html>
